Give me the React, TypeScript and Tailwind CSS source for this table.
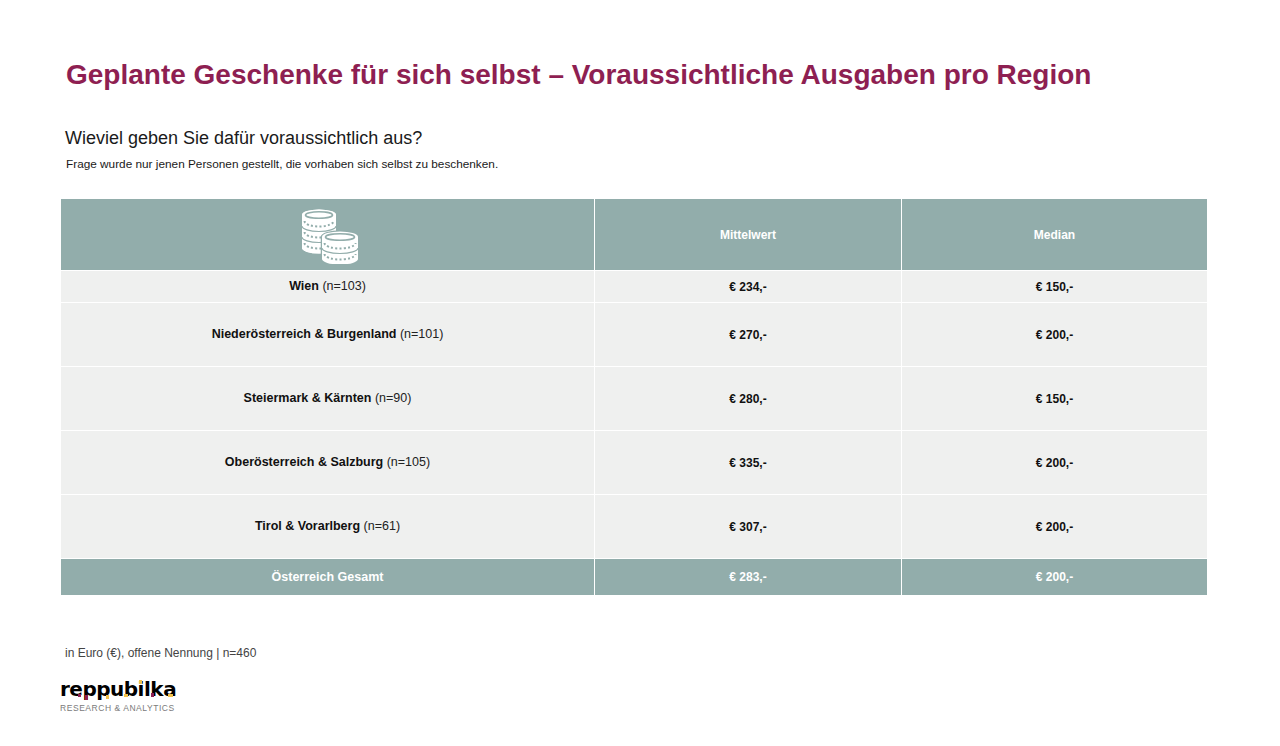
import React from 'react';

const ROWS = [
  { region: 'Wien', n: '(n=103)', mean: '€ 234,-', median: '€ 150,-', h: 'h-[32px]' },
  { region: 'Niederösterreich & Burgenland', n: '(n=101)', mean: '€ 270,-', median: '€ 200,-', h: 'h-[64px]' },
  { region: 'Steiermark & Kärnten', n: '(n=90)', mean: '€ 280,-', median: '€ 150,-', h: 'h-[64px]' },
  { region: 'Oberösterreich & Salzburg', n: '(n=105)', mean: '€ 335,-', median: '€ 200,-', h: 'h-[64px]' },
  { region: 'Tirol & Vorarlberg', n: '(n=61)', mean: '€ 307,-', median: '€ 200,-', h: 'h-[64px]' },
];

const TEAL = '#92adab';

function CoinStack({ cx, top, rx, ry, coins, outline }: { cx: number; top: number; rx: number; ry: number; coins: number; outline?: boolean }) {
  const band = 11;
  const bottom = top + coins * band;
  const body = `M ${cx - rx} ${top} L ${cx - rx} ${bottom} A ${rx} ${ry} 0 0 0 ${cx + rx} ${bottom} L ${cx + rx} ${top} Z`;
  return (
    <g>
      <path d={body} fill="white" stroke={outline ? TEAL : 'none'} strokeWidth={outline ? 2.5 : 0} strokeLinejoin="round" />
      <ellipse cx={cx} cy={top} rx={rx} ry={ry} fill="white" stroke={outline ? TEAL : 'none'} strokeWidth={outline ? 2.5 : 0} />
      <path d={body} fill="white" />
      <ellipse cx={cx} cy={top} rx={rx} ry={ry} fill="white" />
      <ellipse cx={cx} cy={top} rx={rx - 3.5} ry={ry - 2.2} fill="none" stroke={TEAL} strokeWidth={1.6} />
      {Array.from({ length: coins }).map((_, i) => (
        <g key={i}>
          <path
            d={`M ${cx - rx + 2.5} ${top + i * band + 6} A ${rx - 2.5} ${ry} 0 0 0 ${cx + rx - 2.5} ${top + i * band + 6}`}
            fill="none"
            stroke={TEAL}
            strokeWidth={2}
            strokeDasharray="2 2.2"
          />
          {i < coins - 1 && (
            <path
              d={`M ${cx - rx} ${top + (i + 1) * band} A ${rx} ${ry} 0 0 0 ${cx + rx} ${top + (i + 1) * band}`}
              fill="none"
              stroke={TEAL}
              strokeWidth={1.2}
            />
          )}
        </g>
      ))}
    </g>
  );
}

function Coins() {
  return (
    <svg width="60" height="56" viewBox="0 0 60 56" aria-hidden="true">
      <CoinStack cx={19} top={7} rx={17} ry={5.5} coins={3} />
      <CoinStack cx={40} top={29} rx={18} ry={5.5} coins={2} outline />
    </svg>
  );
}

function Logo() {
  return (
    <div className="flex flex-col">
      <div className="relative w-fit text-[20px] font-bold leading-[20px] tracking-[-0.5px] text-black" style={{ fontFamily: '"DejaVu Sans", sans-serif' }}>
        reppubilka
        <span className="absolute left-[18px] top-[15px] h-[3px] w-[3px] bg-[#8e1f52]" />
        <span className="absolute left-[25px] top-[16px] h-[5px] w-[3px] bg-[#8e1f52]" />
        <span className="absolute left-[46px] top-[16px] h-[4px] w-[3px] bg-[#f1c24b]" />
        <span className="absolute left-[64px] top-[15px] h-[3px] w-[4px] bg-[#f1c24b]" />
        <span className="absolute left-[79px] top-[1px] h-[4px] w-[3px] bg-[#f1c24b]" />
        <span className="absolute left-[91px] top-[14px] h-[4px] w-[3px] bg-[#8e1f52]" />
        <span className="absolute left-[108px] top-[15px] h-[3px] w-[5px] bg-[#f1c24b]" />
      </div>
      <div className="mt-[4px] text-[8.5px] leading-[10px] tracking-[0.55px] text-[#7a7a7a]" style={{ fontFamily: '"Liberation Sans", sans-serif' }}>
        RESEARCH &amp; ANALYTICS
      </div>
    </div>
  );
}

export default function App() {
  return (
    <div className="relative h-[746px] w-[1280px] overflow-hidden bg-white px-[60px]" style={{ fontFamily: '"Liberation Sans", Arial, sans-serif' }}>
      <h1 className="pl-[6px] pt-[58px] text-[28px] font-bold leading-[34px] text-[#8e1f52]">
        Geplante Geschenke für sich selbst – Voraussichtliche Ausgaben pro Region
      </h1>

      <p className="mt-[35px] pl-[5px] text-[18px] leading-[22px] text-[#1a1a1a]">Wieviel geben Sie dafür voraussichtlich aus?</p>
      <p className="mt-[8px] pl-[6px] text-[11.8px] leading-[14px] text-[#1a1a1a]">
        Frage wurde nur jenen Personen gestellt, die vorhaben sich selbst zu beschenken.
      </p>

      <table className="mt-[27px] w-[1147px] table-fixed border-collapse text-[12.5px]">
        <colgroup>
          <col className="w-[534px]" />
          <col className="w-[307px]" />
          <col className="w-[306px]" />
        </colgroup>
        <thead>
          <tr className="h-[72px] bg-[#92adab] text-white">
            <th className="border border-white">
              <div className="flex justify-center pl-[4px] pt-[2px]">
                <Coins />
              </div>
            </th>
            <th className="border border-white text-[12px] font-bold">Mittelwert</th>
            <th className="border border-white text-[12px] font-bold">Median</th>
          </tr>
        </thead>
        <tbody>
          {ROWS.map((row) => (
            <tr key={row.region} className={`${row.h} bg-[#eff0ef] text-[#111]`}>
              <td className="border border-white text-center">
                <span className="font-bold">{row.region}</span> <span className="text-[#222]">{row.n}</span>
              </td>
              <td className="border border-white text-center text-[12px] font-bold">{row.mean}</td>
              <td className="border border-white text-center text-[12px] font-bold">{row.median}</td>
            </tr>
          ))}
          <tr className="h-[37px] bg-[#92adab] text-white">
            <td className="border border-white text-center font-bold">Österreich Gesamt</td>
            <td className="border border-white text-center text-[12px] font-bold">€ 283,-</td>
            <td className="border border-white text-center text-[12px] font-bold">€ 200,-</td>
          </tr>
        </tbody>
      </table>

      <p className="mt-[50px] pl-[5px] text-[12px] leading-[14px] text-[#444]">in Euro (€), offene Nennung | n=460</p>

      <div className="mt-[19px]">
        <Logo />
      </div>
    </div>
  );
}
